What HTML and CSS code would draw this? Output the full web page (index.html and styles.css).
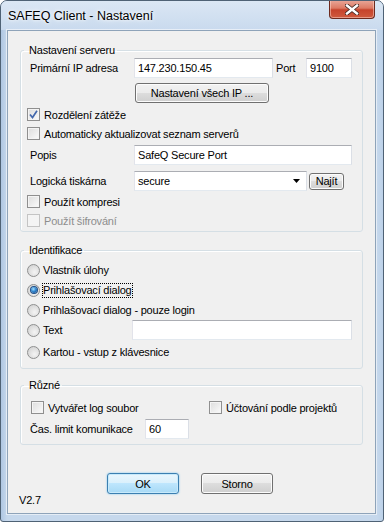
FILE: index.html
```html
<!DOCTYPE html>
<html lang="cs">
<head>
    <meta charset="UTF-8">
    <title>SAFEQ Client - Nastavení</title>
    <link rel="stylesheet" href="styles.css">
</head>
<body>
    <div class="window">
        <div class="titlebar">
            <span class="title">SAFEQ Client - Nastavení</span>
            <span class="close">
                <svg width="14" height="11" viewBox="0 0 14 11">
                    <path d="M2 1.5 L12 9.5 M12 1.5 L2 9.5" stroke="#3d2520" stroke-width="4" stroke-linecap="square"/>
                    <path d="M2 1.5 L12 9.5 M12 1.5 L2 9.5" stroke="#fff" stroke-width="2.4" stroke-linecap="square"/>
                </svg>
            </span>
        </div>
        <div class="client">
            <fieldset class="group server">
                <legend>Nastavení serveru</legend>
                <div class="row ip-row">
                    <span class="lbl">Primární IP adresa</span>
                    <span class="field ip">147.230.150.45</span>
                    <span class="port-lbl">Port</span>
                    <span class="field port">9100</span>
                </div>
                <div class="row btn-row">
                    <span class="btn all-ip">Nastavení všech IP ...</span>
                </div>
                <div class="check first">
                    <span class="box checked">
                        <svg width="9" height="9" viewBox="0 0 9 9"><path d="M1 4.5 L3.5 7.5 L8 0.8" fill="none" stroke="#4468ac" stroke-width="1.7"/></svg>
                    </span>
                    <span>Rozdělení zátěže</span>
                </div>
                <div class="check">
                    <span class="box"></span>
                    <span>Automaticky aktualizovat seznam serverů</span>
                </div>
                <div class="row popis-row">
                    <span class="lbl">Popis</span>
                    <span class="field popis">SafeQ Secure Port</span>
                </div>
                <div class="row combo-row">
                    <span class="lbl">Logická tiskárna</span>
                    <span class="field combo">
                        <span class="combo-text">secure</span>
                        <svg class="arrow" width="7" height="4" viewBox="0 0 7 4"><path d="M0 0 H7 L3.5 4 Z" fill="#000"/></svg>
                    </span>
                    <span class="btn find">Najít</span>
                </div>
                <div class="check after-combo">
                    <span class="box"></span>
                    <span>Použít kompresi</span>
                </div>
                <div class="check disabled">
                    <span class="box"></span>
                    <span>Použít šifrování</span>
                </div>
            </fieldset>

            <fieldset class="group ident">
                <legend>Identifikace</legend>
                <div class="radio first">
                    <span class="dot"></span>
                    <span>Vlastník úlohy</span>
                </div>
                <div class="radio">
                    <span class="dot selected"></span>
                    <span class="focus">Prihlašovací dialog</span>
                </div>
                <div class="radio">
                    <span class="dot"></span>
                    <span>Prihlašovací dialog - pouze login</span>
                </div>
                <div class="radio">
                    <span class="dot"></span>
                    <span class="radio-lbl">Text</span>
                    <span class="field text-field"></span>
                </div>
                <div class="radio last">
                    <span class="dot"></span>
                    <span>Kartou - vstup z klávesnice</span>
                </div>
            </fieldset>

            <fieldset class="group misc">
                <legend>Různé</legend>
                <div class="check first">
                    <span class="box"></span>
                    <span class="log-lbl">Vytvářet log soubor</span>
                    <span class="box"></span>
                    <span>Účtování podle projektů</span>
                </div>
                <div class="row limit-row">
                    <span class="limit-lbl">Čas. limit komunikace</span>
                    <span class="field limit">60</span>
                </div>
            </fieldset>

            <div class="actions">
                <span class="btn default">OK</span>
                <span class="btn">Storno</span>
            </div>
            <div class="version">V2.7</div>
        </div>
    </div>
</body>
</html>
```

FILE: styles.css
```css
body {
    margin: 0;
    font-family: "Liberation Sans", Arial, sans-serif;
    font-size: 11px;
    letter-spacing: -0.2px;
    color: #000;
}
.window {
    width: 384px;
    height: 522px;
    box-sizing: border-box;
    border: 1px solid #4f6275;
    border-radius: 7px 7px 3px 3px;
    background: linear-gradient(90deg, #aec6e2 0px, #c6d8ec 6px, #c6d8ec 376px, #b9cfe7 384px);
    display: flex;
    flex-direction: column;
    overflow: hidden;
}
.titlebar {
    height: 29px;
    flex-shrink: 0;
    display: flex;
    align-items: center;
    padding-left: 7px;
    background: linear-gradient(#dbe7f4, #c9daee);
}
.title {
    font-size: 12.5px;
    letter-spacing: 0;
    flex: 1;
    margin-top: 1px;
    text-shadow: 0 0 6px #fff, 0 0 3px #fff;
}
.close {
    align-self: flex-start;
    margin-top: -1px;
    margin-right: 8px;
    width: 46px;
    height: 19px;
    box-sizing: border-box;
    border: 1px solid #6d2a1e;
    border-top: none;
    border-radius: 0 0 4px 4px;
    background: linear-gradient(#e9a99b 0%, #dd7a64 45%, #c6432b 55%, #cf5a3e 100%);
    box-shadow: inset 0 0 0 1px rgba(255, 220, 210, 0.5);
    display: flex;
    align-items: center;
    justify-content: center;
}
.client {
    flex: 1;
    margin: 0 7px 7px 6px;
    border: 1px solid #8ea3b9;
    box-shadow: 0 0 0 1px rgba(255, 255, 255, 0.55);
    background: #f0f0f0;
    display: flex;
    flex-direction: column;
}
.group {
    margin: 0 12px;
    padding: 1px 6px 1px 6px;
    border: 1px solid #d5dfe5;
    border-radius: 3px;
    box-shadow: inset 1px 1px 0 #fff;
    min-width: 0;
}
.group legend {
    margin-left: -3px;
    padding: 0 2px 0 5px;
    line-height: 13px;
}
.server {
    margin-top: 13px;
}
.ident {
    margin-top: 12px;
    padding-bottom: 6px;
}
.misc {
    margin-top: 10px;
    padding-bottom: 5px;
}
.row {
    display: flex;
    align-items: center;
    height: 20px;
}
.lbl {
    width: 107px;
    padding-left: 3px;
    box-sizing: border-box;
    flex-shrink: 0;
}
.field {
    height: 20px;
    box-sizing: border-box;
    background: #fff;
    border: 1px solid;
    border-color: #abadb3 #dbdfe6 #e3e9ef #e2e3ea;
    padding-left: 3px;
    display: flex;
    align-items: center;
    flex-shrink: 0;
}
.ip {
    width: 139px;
}
.port-lbl {
    margin-left: 3px;
    width: 30px;
}
.port {
    width: 46px;
}
.btn-row {
    margin-top: 5px;
}
.btn {
    height: 20px;
    box-sizing: border-box;
    border: 1px solid #707070;
    border-radius: 3px;
    background: linear-gradient(#f2f2f2 0%, #ebebeb 50%, #dddddd 50%, #cfcfcf 100%);
    box-shadow: inset 0 0 0 1px #fcfcfc;
    display: flex;
    align-items: center;
    justify-content: center;
    flex-shrink: 0;
}
.all-ip {
    margin-left: 108px;
    width: 134px;
}
.check {
    display: flex;
    align-items: center;
    height: 19px;
    gap: 4px;
}
.check.first {
    margin-top: 2px;
}
.box {
    width: 13px;
    height: 13px;
    box-sizing: border-box;
    border: 1px solid #8f8f8f;
    background: linear-gradient(135deg, #dcdcdc, #fbfbfb);
    box-shadow: inset 0 0 0 1px #f4f4f4;
    display: flex;
    align-items: center;
    justify-content: center;
    flex-shrink: 0;
}
.disabled {
    color: #8d8d8d;
}
.disabled .box {
    border-color: #c4c4c4;
    background: #f4f4f4;
}
.popis-row {
    margin-top: 2px;
}
.popis {
    width: 218px;
}
.combo-row {
    margin-top: 6px;
}
.combo {
    width: 173px;
    padding-right: 6px;
}
.combo-text {
    flex: 1;
}
.find {
    margin-left: 2px;
    width: 35px;
    height: 17px;
}
.after-combo {
    margin-top: 1px;
}
.radio {
    display: flex;
    align-items: center;
    height: 20px;
    gap: 3px;
}
.radio.first {
    margin-top: 2px;
}
.radio.last {
    margin-top: 2px;
}
.dot {
    width: 13px;
    height: 13px;
    box-sizing: border-box;
    border-radius: 50%;
    border: 1px solid #8e8f8f;
    background: radial-gradient(circle at 60% 65%, #f4f4f4 0%, #d8d8d8 70%, #cfcfcf 100%);
    flex-shrink: 0;
    display: flex;
    align-items: center;
    justify-content: center;
}
.dot.selected::after {
    content: "";
    width: 6px;
    height: 6px;
    border-radius: 50%;
    background: radial-gradient(circle at 40% 35%, #a6e2ff 0%, #2f86d0 45%, #0d3f80 100%);
    box-shadow: 0 0 0 1px #1f4f88;
}
.focus {
    outline: 1px dotted #000;
    outline-offset: 0;
    line-height: 13px;
}
.radio-lbl {
    width: 86px;
}
.text-field {
    width: 220px;
    margin-top: -1px;
}
.log-lbl {
    width: 157px;
}
.misc .check.first {
    margin-top: 5px;
    padding-left: 4px;
}
.limit-row {
    margin-top: 2px;
}
.limit-lbl {
    width: 118px;
    padding-left: 3px;
    box-sizing: border-box;
}
.limit {
    width: 44px;
}
.actions {
    display: flex;
    gap: 22px;
    margin-top: 28px;
    padding-left: 99px;
}
.actions .btn {
    width: 72px;
    height: 21px;
}
.actions .default {
    border-color: #3c7fb1;
    background: linear-gradient(#eaf6fd 0%, #d9f0fc 50%, #bee6fd 50%, #a7d9f5 100%);
    box-shadow: inset 0 0 0 1px #c8eafb, 0 0 2px #6fc2ef;
}
.version {
    padding-left: 11px;
    line-height: 13px;
}
```
